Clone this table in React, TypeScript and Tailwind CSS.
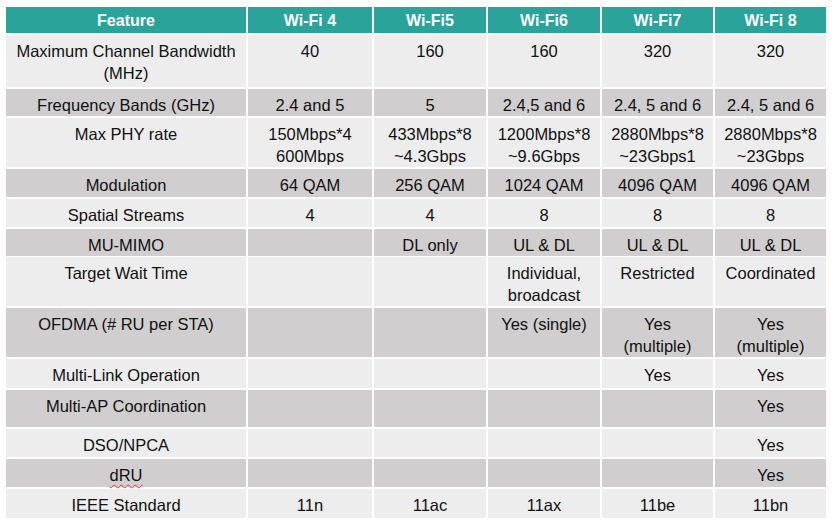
const cols = 'grid grid-cols-[240px_124px_112px_112px_111px_111px] gap-x-[2px]'

type Row = { h: string; dark: boolean; cells: (string | string[])[] }

const headers = ['Feature', 'Wi-Fi 4', 'Wi-Fi5', 'Wi-Fi6', 'Wi-Fi7', 'Wi-Fi 8']

const rows: Row[] = [
  { h: 'h-[52px]', dark: false, cells: ['Maximum Channel Bandwidth (MHz)', '40', '160', '160', '320', '320'] },
  { h: 'h-[27px]', dark: true, cells: ['Frequency Bands (GHz)', '2.4 and 5', '5', '2.4,5 and 6', '2.4, 5 and 6', '2.4, 5 and 6'] },
  {
    h: 'h-[49px]',
    dark: false,
    cells: [
      'Max PHY rate',
      ['150Mbps*4', '600Mbps'],
      ['433Mbps*8', '~4.3Gbps'],
      ['1200Mbps*8', '~9.6Gbps'],
      ['2880Mbps*8', '~23Gbps1'],
      ['2880Mbps*8', '~23Gbps'],
    ],
  },
  { h: 'h-[28px]', dark: true, cells: ['Modulation', '64 QAM', '256 QAM', '1024 QAM', '4096 QAM', '4096 QAM'] },
  { h: 'h-[28px]', dark: false, cells: ['Spatial Streams', '4', '4', '8', '8', '8'] },
  { h: 'h-[26px]', dark: true, cells: ['MU-MIMO', '', 'DL only', 'UL & DL', 'UL & DL', 'UL & DL'] },
  { h: 'h-[49px]', dark: false, cells: ['Target Wait Time', '', '', ['Individual,', 'broadcast'], 'Restricted', 'Coordinated'] },
  { h: 'h-[49px]', dark: true, cells: ['OFDMA (# RU per STA)', '', '', 'Yes (single)', ['Yes', '(multiple)'], ['Yes', '(multiple)']] },
  { h: 'h-[29px]', dark: false, cells: ['Multi-Link Operation', '', '', '', 'Yes', 'Yes'] },
  { h: 'h-[37px]', dark: true, cells: ['Multi-AP Coordination', '', '', '', '', 'Yes'] },
  { h: 'h-[28px]', dark: false, cells: ['DSO/NPCA', '', '', '', '', 'Yes'] },
  { h: 'h-[28px]', dark: true, cells: ['dRU', '', '', '', '', 'Yes'] },
  { h: 'h-[29px]', dark: false, cells: ['IEEE Standard', '11n', '11ac', '11ax', '11be', '11bn'] },
]

function Cell({ value }: { value: string | string[] }) {
  if (value === 'dRU') {
    return <span className="underline decoration-wavy decoration-red-500 decoration-1 underline-offset-[3px]">dRU</span>
  }
  if (Array.isArray(value)) {
    return (
      <>
        {value.map((line) => (
          <span key={line} className="block">{line}</span>
        ))}
      </>
    )
  }
  return <>{value}</>
}

export default function App() {
  return (
    <div className="w-[834px] h-[529px] bg-white pt-[7px] pl-[6px] font-['Liberation_Sans',Arial,sans-serif] text-[16.5px] text-[#111]">
      <div className="flex flex-col gap-y-[2px] w-[820px]">
        {/* Header */}
        <div className={`${cols} h-[26px]`}>
          {headers.map((h) => (
            <div key={h} className="bg-[#2aa39a] text-white font-bold text-[16px] text-center leading-[22px] pt-[3px]">
              {h}
            </div>
          ))}
        </div>

        {rows.map((row) => (
          <div key={row.cells[0] as string} className={`${cols} ${row.h}`}>
            {row.cells.map((c, i) => (
              <div
                key={i}
                className={`${row.dark ? 'bg-[#d0cece]' : 'bg-[#ededed]'} text-center leading-[22px] pt-[5px] px-1`}
              >
                <Cell value={c} />
              </div>
            ))}
          </div>
        ))}
      </div>
    </div>
  )
}
